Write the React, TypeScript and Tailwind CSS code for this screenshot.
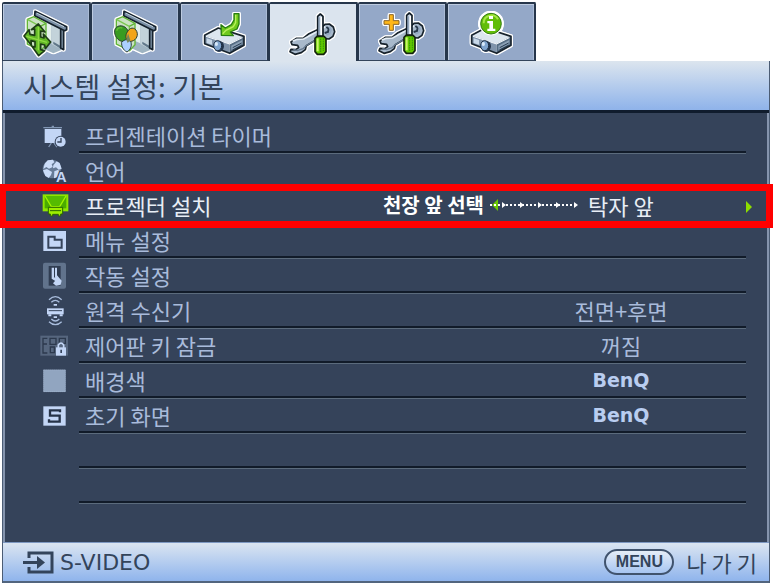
import { useState } from 'react';
import type { ReactNode } from 'react';

interface MenuItem {
    id: string;
    label: string;
    value?: string;
    latin?: boolean;
    icon: ReactNode;
}

/* Tab icons get a thin white outline around their silhouette */
const TabSvg = ({ box, children }: { box: string; children: ReactNode }) => (
    <svg
        className="h-[50px] w-[50px] [filter:drop-shadow(1px_0_0_#fff)_drop-shadow(-1px_0_0_#fff)_drop-shadow(0_1px_0_#fff)_drop-shadow(0_-1px_0_#fff)]"
        viewBox={box}
        aria-hidden="true"
    >
        {children}
    </svg>
);

const RowSvg = ({ box, children }: { box: string; children: ReactNode }) => (
    <svg className="h-7 w-7 overflow-visible" viewBox={box} aria-hidden="true">
        {children}
    </svg>
);

/* Pull-down projection screen, shared by the first two tabs */
const Screen = () => (
    <>
        <path d="M108 48l76 40v62l-24 10-52-24z" fill="#9fb4c2" />
        <path d="M112 52l42 22v56l-42-18z" fill="#e3efeb" />
        <path d="M154 74l27 14v58l-27-14z" fill="#c3d3da" />
        <path d="M160 132l22 14v-8l-22-13z" fill="#607789" />
        <path d="M182 84v60l9 5V88" fill="#7e93a6" stroke="#16222d" strokeWidth="5" strokeLinejoin="round" />
        <path
            d="M105 34l95 46v9l-6 3-90-45z"
            fill="#7b90a6"
            stroke="#16222d"
            strokeWidth="5"
            strokeLinejoin="round"
        />
        <path d="M110 39l82 41" stroke="#c5d4e0" strokeWidth="3" />
        <path d="M82 58l19-8 37 20v64l-16 18-40-20z" fill="#cbe2c4" stroke="#62b536" strokeWidth="4" />
        <path d="M82 58l39 21v72" fill="none" stroke="#7bc750" strokeWidth="4" />
        <path d="M121 79l17-9" stroke="#62b536" strokeWidth="4" />
    </>
);

/* Projector body in a 130 x 90 area */
const Projector = () => (
    <>
        <path d="M4 37L45 15l77 25-43 22z" fill="#dce6ef" />
        <path d="M4 37l75 25v29L4 62z" fill="#8094ab" />
        <path d="M79 62l43-22v27L79 91z" fill="#566d84" />
        <path d="M84 68l33-17v12L84 81z" fill="#8ba0b5" />
        <path d="M88 74l27-14M88 81l27-14" stroke="#263a50" strokeWidth="3" />
        <path d="M10 46l16 5v14l-16-5z" fill="#c8d8e8" />
        <path d="M4 37L45 15l77 25v27L79 91 4 62z" fill="none" stroke="#18232d" strokeWidth="5" strokeLinejoin="round" />
        <path d="M8 40l71 23 38-19" fill="none" stroke="#f4f8fb" strokeWidth="3" />
        <ellipse cx="47" cy="70" rx="15" ry="17" fill="#23354b" />
        <ellipse cx="43" cy="68" rx="12" ry="15" fill="#7fa4ce" stroke="#1d2d40" strokeWidth="3" />
        <ellipse cx="39" cy="63" rx="5" ry="6" fill="#d8e9fa" />
    </>
);

/* Crossed wrench and screwdriver */
const Tools = () => (
    <>
        <path
            d="M93 123l16-11 22-1 16-13 38-18 10-10 13-1 12 9 4 14-5 14-12 8-14-1-12-4-42 25-3 12-12 9-19 5-15-8 3-7 14 1 9-6-3-7-17-2z"
            fill="#a8b9cb"
            stroke="#17222b"
            strokeWidth="5"
            strokeLinejoin="round"
        />
        <path d="M98 121l13-6 20-1 55-30 10-7" fill="none" stroke="#e4edf5" strokeWidth="5" />
        <path d="M100 145l12 4 17-6 8-8 43-26" fill="none" stroke="#65798f" strokeWidth="4" />
        <path d="M199 78l7 5-2 10-10 3" fill="none" stroke="#28394b" strokeWidth="6" />
        <path d="M208 78l5 9-4 10-10 5" fill="none" stroke="#94a9c1" strokeWidth="5" />
        <path d="M173 46l8-7 8 7v59h-16z" fill="#cbd8e5" stroke="#101b24" strokeWidth="5" strokeLinejoin="round" />
        <path d="M177 49v54" stroke="#798da6" strokeWidth="4" />
        <path d="M184 48v55" stroke="#fff" strokeWidth="4" />
        <path
            d="M165 112l6-6h21l6 6v40l-7 8h-19l-7-8z"
            fill="#62c900"
            stroke="#14240d"
            strokeWidth="5"
            strokeLinejoin="round"
        />
        <path d="M173 112v39" stroke="#cbf56d" strokeWidth="6" />
        <path d="M182 113v40M190 112v38" stroke="#359409" strokeWidth="3" strokeDasharray="5 2" />
    </>
);

const tabs = [
    {
        label: '디스플레이',
        icon: (
            <TabSvg box="63 21 150 150">
                <Screen />
                <path
                    d="M115 72l20 24-13-3v18l10 3-2-12 22 24-16 20-2-11-12-3v17l12 3-18 15-20-28 9 2v-16l-12-3 1 14-22-28 15-19 3 14 14 3V87l-10 2z"
                    fill="#62b827"
                    stroke="#1d3d16"
                    strokeWidth="5"
                    strokeLinejoin="round"
                />
                <path d="M115 81v70M79 109l62 18" stroke="#8edc42" strokeWidth="4" />
            </TabSvg>
        ),
    },
    {
        label: '화상',
        icon: (
            <TabSvg box="63 21 150 150">
                <Screen />
                <g stroke="#2b4034" strokeWidth="3">
                    <path d="M77 91c3-15 24-19 36-5 9 12 7 26 0 36-19 10-39-11-36-31z" fill="#389b21" />
                    <path d="M118 92c7-13 25-9 27 9 1 15-12 25-26 23-12-7-10-23-1-32z" fill="#f2a516" />
                    <path d="M98 127c9-11 22-10 28 0 3 12-2 23-12 29-12-6-17-17-16-29z" fill="#acd0ff" />
                </g>
                <path d="M112 119l5-19 7 21-8 8z" fill="#75845c" />
                <path d="M83 92q4-12 17-8" fill="none" stroke="#62bd35" strokeWidth="4" />
            </TabSvg>
        ),
    },
    {
        label: '신호',
        icon: (
            <TabSvg box="63 21 150 150">
                <g transform="translate(76 69)">
                    <Projector />
                </g>
                <path
                    d="M168 41h15v31l-6 15-20 9 9 11-36-1-1-32 13 10 18-10 8-14z"
                    fill="#70c91c"
                    stroke="#277d13"
                    strokeWidth="4"
                    strokeLinejoin="round"
                />
                <path d="M173 44v24l-7 12-22 11-10 10" fill="none" stroke="#b7f05d" strokeWidth="4" />
            </TabSvg>
        ),
    },
    {
        label: '시스템 설정: 기본',
        icon: (
            <TabSvg box="84 21 150 150">
                <Tools />
            </TabSvg>
        ),
    },
    {
        label: '시스템 설정: 고급',
        icon: (
            <TabSvg box="84 21 150 150">
                <Tools />
                <path
                    d="M121 44h12v18h17v11h-17v18h-12V73h-16V62h16z"
                    fill="#ffb719"
                    stroke="#8b6422"
                    strokeWidth="3"
                />
            </TabSvg>
        ),
    },
    {
        label: '정보',
        icon: (
            <TabSvg box="84 21 150 150">
                <g transform="translate(97 69)">
                    <Projector />
                </g>
                <circle cx="159" cy="71" r="35" fill="#fff" />
                <circle cx="159" cy="71" r="31" fill="#62bd08" stroke="#347d12" strokeWidth="3" />
                <path d="M137 70a23 23 0 0 1 43-12" fill="none" stroke="#a5e744" strokeWidth="6" />
                <path d="M153 48h12v9h-12zM148 63h17v23h7v7h-24v-7h6V70h-6z" fill="#fff" />
            </TabSvg>
        ),
    },
];

const items: MenuItem[] = [
    {
        id: 'timer',
        label: '프리젠테이션 타이머',
        icon: (
            <RowSvg box="123 33 84 84">
                <path d="M130 51h56v4h-56zM155 47h7v6h-7z" fill="#8297b4" />
                <path d="M134 57h50v42h-50z" fill="#c3d6f6" />
                <path d="M154 99l-8 12M162 99l9 12" stroke="#8297b4" strokeWidth="4" />
                <circle cx="182" cy="95" r="18" fill="#35435a" />
                <circle cx="182" cy="95" r="15" fill="#c3d6f6" />
                <path d="M183 84v12h-11" fill="none" stroke="#35435a" strokeWidth="4" />
            </RowSvg>
        ),
    },
    {
        id: 'language',
        label: '언어',
        icon: (
            <RowSvg box="123 138 84 84">
                <circle cx="156" cy="177" r="28" fill="#667a96" />
                <path
                    d="M143 151l16-2 4 8-8 6 3 8-11 5-8-5-9 6 4-16zM170 154l9 5 6 17-9 3-8-7-9 3 1-9zM129 181l12-4 15 9-3 9-7 9-10-6zM163 184l10-4 9 4-8 17-12 4z"
                    fill="#cbdcf8"
                />
                <text
                    x="184"
                    y="216"
                    textAnchor="middle"
                    className="fill-[#c3d6f6] stroke-[#35435a] font-['Liberation_Sans',sans-serif] text-[44px] font-bold"
                    strokeWidth="7"
                    paintOrder="stroke"
                >
                    A
                </text>
            </RowSvg>
        ),
    },
    {
        id: 'install',
        label: '프로젝터 설치',
        value: '탁자 앞',
        icon: (
            <RowSvg box="123 243 84 84">
                <path d="M128 253h77v51h-77z" fill="#8fe600" />
                <path d="M134 258h65v37h-65z" fill="#4aac00" />
                <path d="M135 258l19 32h25l19-32" fill="#55bb00" stroke="#a2f400" strokeWidth="4" />
                <path d="M145 292h43v20h-6v6h-7v-5h-17v5h-7v-6h-6z" fill="#9dee00" stroke="#286500" strokeWidth="3" />
                <path d="M150 302h33" stroke="#286500" strokeWidth="3" />
            </RowSvg>
        ),
    },
    {
        id: 'menu',
        label: '메뉴 설정',
        icon: (
            <RowSvg box="123 3 84 84">
                <path d="M130 18h68v60h-68z" fill="#c3d6f6" />
                <path d="M145 35h19v9h21v24h-40z" fill="none" stroke="#35435a" strokeWidth="6" />
            </RowSvg>
        ),
    },
    {
        id: 'operation',
        label: '작동 설정',
        icon: (
            <RowSvg box="123 108 84 84">
                <rect x="129" y="113" width="69" height="78" rx="6" fill="#61738c" />
                <path d="M146 123h36v59h-36z" fill="#303d52" />
                <path d="M155 128h7v28l7 7-2 6-12-8zM165 128h6v23l14 16-3 12-14 3-9-7 8-9-2-9z" fill="#c3d6f6" />
            </RowSvg>
        ),
    },
    {
        id: 'receiver',
        label: '원격 수신기',
        value: '전면+후면',
        icon: (
            <RowSvg box="123 213 84 84">
                <path d="M141 250h50v18h-50z" fill="#c3d6f6" />
                <path d="M146 257h40" stroke="#35435a" strokeWidth="3" />
                <path d="M145 268h9v6h-9zM179 268h9v6h-9z" fill="#c3d6f6" />
                <path
                    d="M147 224q19-18 38 0M154 232q12-12 24 0M147 290q19 18 38 0M154 282q12 12 24 0"
                    fill="none"
                    stroke="#a9bddd"
                    strokeWidth="4"
                />
                <path d="M161 237h10v5h-10zM161 274h10v5h-10z" fill="#c3d6f6" />
            </RowSvg>
        ),
    },
    {
        id: 'keylock',
        label: '제어판 키 잠금',
        value: '꺼짐',
        icon: (
            <RowSvg box="123 -27 84 84">
                <path d="M121-13h83v60h-83z" fill="#56667e" />
                <path
                    d="M142-5h-13v44h13M129 12h12M150-5h18v18h-18zM178-5h18v15h-18zM151 21h12v17h-12z"
                    fill="none"
                    stroke="#2c394d"
                    strokeWidth="4"
                />
                <path d="M175 24v-9q8-11 16 0v9" fill="none" stroke="#c3d6f6" strokeWidth="5" />
                <path d="M168 22h30v25h-30z" fill="#c3d6f6" />
                <path d="M181 29h5v10h-5z" fill="#35435a" />
            </RowSvg>
        ),
    },
    {
        id: 'background',
        label: '배경색',
        value: 'BenQ',
        latin: true,
        icon: (
            <RowSvg box="123 78 84 84">
                <path d="M130 89h67v67h-67z" fill="#91a5c0" />
                <path d="M131 90h65v65h-65z" fill="none" stroke="#a7bad3" strokeWidth="2" strokeDasharray="3 3" />
            </RowSvg>
        ),
    },
    {
        id: 'splash',
        label: '초기 화면',
        value: 'BenQ',
        latin: true,
        icon: (
            <RowSvg box="123 183 84 84">
                <path d="M130 199h67v58h-67z" fill="#c3d6f6" />
                <path d="M180 217v-6h-30v16h29v18h-32v-7" fill="none" stroke="#263348" strokeWidth="7" />
            </RowSvg>
        ),
    },
];

/* Dotted arrows between the two ends of the setting */
const DottedArrows = () => (
    <svg className="mx-1 h-4 w-[92px] shrink-0" viewBox="0 0 92 16" aria-hidden="true">
        <path d="M10 2v12L4 8z" fill="#69c800" />
        <path d="M2 8h85" stroke="#fff" strokeWidth="2" strokeDasharray="2 2" />
        <path d="M14 5l4 3-4 3zM32 5l4 3-4 3zM50 5l4 3-4 3zM68 5l4 3-4 3zM86 5l4 3-4 3z" fill="#fff" />
    </svg>
);

const line = 'border-b border-[#5b6b7c] shadow-[inset_0_-2px_0_#111b29]';

const App = () => {
    const [tab, setTab] = useState(3);
    const [selected, setSelected] = useState('install');

    return (
        <main className="bg-white pt-0.5 pr-[3px] pb-1 pl-0.5 font-['Noto_Sans_CJK_KR',sans-serif]">
            {/* Tabs */}
            <div role="tablist" className="flex">
                {tabs.map((t, index) => (
                    <button
                        key={t.label}
                        role="tab"
                        aria-label={t.label}
                        aria-selected={tab === index}
                        onClick={() => setTab(index)}
                        className={`
                            flex h-[59px] w-[89px] items-center justify-center
                            rounded-t-xs border-t-2 border-r-2 border-l border-[#26364b]
                            ${tab === index
                                ? 'bg-[#dbe4ee]'
                                : 'border-b border-b-[#33445b] bg-[#94a8c8] shadow-[inset_1px_1px_0_#bdcbe0,inset_-1px_0_0_#aabbd5]'}
                        `}
                    >
                        {t.icon}
                    </button>
                ))}
            </div>

            <div className="border-x border-[#4b5c74]">
                {/* Title bar */}
                <header className="flex h-[52px] items-center border-b-3 border-[#101c2d] bg-linear-to-b from-[#dce5ee] to-[#8fb3ea] px-5">
                    <h1 className="text-[28px] leading-9 text-[#33445b]">시스템 설정: 기본</h1>
                </header>

                {/* Settings list */}
                <ul className="border-x-2 border-[#8594ad] bg-[#35435a] pt-1.5 pb-[38px]">
                    {items.map((item) => {
                        const active = selected === item.id;
                        return (
                            <li key={item.id} className="relative">
                                <button
                                    onClick={() => setSelected(item.id)}
                                    className={`flex h-[35px] w-full items-center text-left ${active ? 'text-[#e8eef6]' : 'text-[#a9bbdb]'}`}
                                >
                                    <span className="flex w-[74px] shrink-0 justify-end pr-[10px] pb-1">{item.icon}</span>
                                    <span className={`flex h-full flex-1 items-center pb-0.5 pl-1.5 text-[22px] leading-8 ${line}`}>
                                        <span className="flex-1">{item.label}</span>
                                        {active && item.value ? (
                                            <>
                                                <span className="text-xl font-bold text-white">천장 앞 선택</span>
                                                <DottedArrows />
                                                <span className="w-[162px] pl-1">{item.value}</span>
                                            </>
                                        ) : (
                                            <span
                                                className={`w-[250px] text-center ${item.latin ? "font-['DejaVu_Sans',sans-serif] text-[19px] font-bold text-[#b9cdf0]" : ''}`}
                                            >
                                                {item.value}
                                            </span>
                                        )}
                                    </span>
                                    <span className="flex w-[21px] shrink-0">
                                        {active && (
                                            <svg className="h-3 w-1.5" viewBox="0 0 6 12" aria-hidden="true">
                                                <path d="M0 0l6 6-6 6z" fill="#8ddd00" />
                                            </svg>
                                        )}
                                    </span>
                                </button>
                                {active && (
                                    <div className="pointer-events-none absolute -inset-x-[6px] -top-[5px] -bottom-1 border-7 border-[#ff0000]" />
                                )}
                            </li>
                        );
                    })}
                    {/* Empty lines */}
                    <li className={`mr-[21px] ml-[74px] h-[35px] ${line}`} />
                    <li className={`mr-[21px] ml-[74px] h-[35px] ${line}`} />
                </ul>

                {/* Status bar */}
                <footer className="flex h-[41px] items-center border-t border-b-2 border-t-[#7d98c2] border-b-[#52657e] bg-linear-to-b from-[#dbe5f1] to-[#8fb4ec] pr-3 pl-5 text-[#33445b]">
                    <svg className="h-[23px] w-[31px]" viewBox="0 0 31 23" aria-hidden="true">
                        <path d="M6 7V2h23v19H6v-5" fill="none" stroke="currentColor" strokeWidth="3" />
                        <path d="M0 10h14V5l8 6.500-8 6.500v-5H0z" fill="currentColor" />
                    </svg>
                    <span className="flex-1 pl-1.5 font-['DejaVu_Sans',sans-serif] text-[22px]">S-VIDEO</span>
                    <button className="flex items-center gap-3 text-[22px] leading-8">
                        <span className="flex h-[26px] w-[70px] items-center justify-center rounded-full border-2 border-[#40536d] bg-linear-to-b from-[#e5edf7] to-[#a7c5f1] font-['Liberation_Sans',sans-serif] text-base font-bold">
                            MENU
                        </span>
                        나 가 기
                    </button>
                </footer>
            </div>
        </main>
    );
};

export default App;
